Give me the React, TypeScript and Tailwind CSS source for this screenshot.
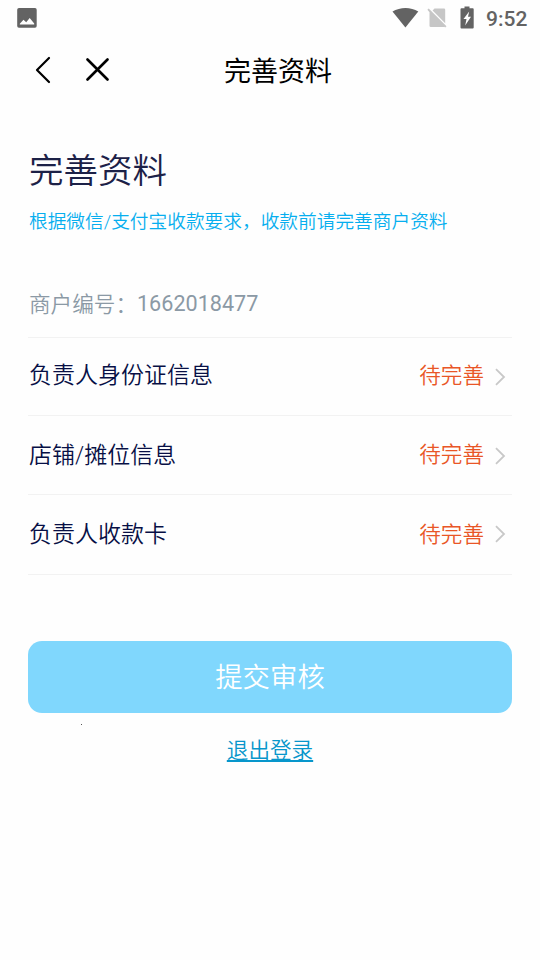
const STATUS = '待完善';

const rows = [
  { label: '负责人身份证信息', size: 'h-[78px] pb-[1px]', labelShift: 'pt-0', chevron: 'top-px' },
  { label: '店铺/摊位信息', size: 'h-[79px]', labelShift: 'pt-[2px]', chevron: 'top-px' },
  { label: '负责人收款卡', size: 'h-20', labelShift: 'pt-0', chevron: '-top-px' },
];

function StatusBar() {
  return (
    <div className="flex h-9 items-center justify-between pl-[15px] pr-3 text-[#636363]">
      <svg width="24" height="24" viewBox="0 0 24 24" fill="currentColor">
        <path fillRule="evenodd" d="M4 2h16q1.700 0 1.700 1.700V20q0 1.700-1.700 1.700H4Q2.200 21.700 2.200 20V3.700Q2.200 2 4 2zM4.800 18.500h14.400v-1L14.700 12l-3.500 4.200-2.700-2.500-3.700 4z" />
      </svg>
      <div className="flex items-center">
        <svg width="27" height="22" viewBox="0 0 27 22" fill="currentColor">
          <path d="M.5 4.500C8-.2 19-.2 26.300 4.500L13.400 20.500z" />
        </svg>
        <svg className="ml-[8px]" width="20" height="22" viewBox="0 0 20 22" fill="#c6c6c6">
          <path d="M7.500 1.500h9.500q1.200 0 1.200 1.200V16.300L5.600 3.500zM1.700 1.500 19.500 19.300l-1.300 1.300-1-.8q-.3.200-1 .2H3.800q-1.300 0-1.300-1.300V5.200L.4 2.800z" />
        </svg>
        <svg className="ml-[12px]" width="16" height="24" viewBox="0 0 16 24" fill="currentColor">
          <path fillRule="evenodd" d="M5.500.5h5v1.800h3.200q1 0 1 1v18.200q0 1-1 1H2.500q-1 0-1-1V3.300q0-1 1-1h3zM10.200 5.500 4.500 13h3l-1.300 6.500L12 10.800H9z" />
        </svg>
        <span className="ml-[11px] w-[42px] pt-[2px] font-[Roboto] text-[21px] font-medium leading-6">9:52</span>
      </div>
    </div>
  );
}

export default function App() {
  return (
    <main className="flex h-[960px] w-[540px] flex-col overflow-hidden bg-[#fefefe] font-[Roboto,'Noto_Sans_CJK_SC',sans-serif] whitespace-nowrap">
      <StatusBar />
      <header className="grid h-[68px] grid-cols-[224px_auto_1fr] items-center">
        <div className="flex items-center gap-[33px] pl-[34px] text-black">
          <svg width="18" height="28" viewBox="0 0 18 28" fill="none" stroke="currentColor" strokeWidth="2.200" strokeLinecap="round" strokeLinejoin="round">
            <path d="M15 2 3 14l12 12" />
          </svg>
          <svg width="24" height="24" viewBox="0 0 24 24" fill="none" stroke="currentColor" strokeWidth="2.600" strokeLinecap="round">
            <path d="M2.500 1.500 22.500 21.500M22.500 1.500 2.500 21.500" />
          </svg>
        </div>
        <h1 className="pt-[4px] text-[27px] leading-9 text-black">完善资料</h1>
      </header>
      <section className="px-[28px] pt-[42px]">
        <h2 className="pl-px text-[34.500px] font-[350] leading-[50px] text-[#1c2147]">完善资料</h2>
        <p className="mt-[12px] pl-px text-[18.700px] font-[350] leading-7 text-[#06aeef]">
          根据微信/支付宝收款要求，收款前请完善商户资料
        </p>
        <p className="mt-[53px] h-[48px] pl-px text-[21.600px] font-[350] leading-8 text-[#8b99a5]">
          商户编号：<span className="relative -top-px font-normal">1662018477</span>
        </p>
        <ul className="border-t border-[#f2f2f2]">
          {rows.map((row) => (
            <li key={row.label} className={`flex items-center justify-between border-b border-[#f2f2f2] pl-px pr-[6px] ${row.size}`}>
              <span className={`text-[23px] font-[350] leading-8 text-[#070f45] ${row.labelShift}`}>{row.label}</span>
              <span className="flex items-center gap-[11px]">
                <span className="text-[21.600px] font-[350] leading-8 text-[#e95627]">{STATUS}</span>
                <svg className={`relative ${row.chevron}`} width="11" height="18" viewBox="0 0 11 18" fill="none" stroke="#c8c8c8" strokeWidth="1.800">
                  <path d="M1 1.200 9 9l-8 7.800" />
                </svg>
              </span>
            </li>
          ))}
        </ul>
        <button className="mt-[66px] flex h-[72px] w-full items-center justify-center rounded-[14px] bg-[#80d7fd] pt-px text-[27.400px] font-[350] leading-10 text-white">
          提交审核
        </button>
        <div className="ml-[53px] mt-[11px] size-px bg-[#555]" />
        <a className="mx-auto mt-[10px] block w-fit text-[21.600px] font-[350] leading-8 text-[#0796cb] underline">退出登录</a>
      </section>
    </main>
  );
}
